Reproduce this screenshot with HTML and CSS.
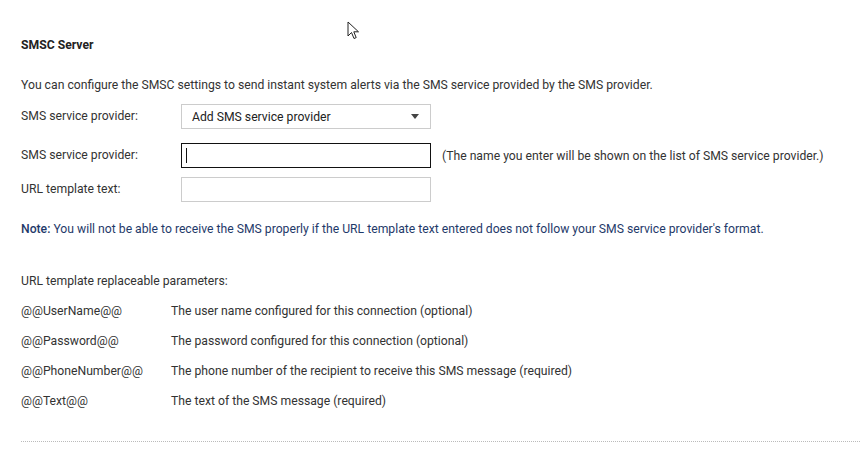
FILE: index.html
```html
<!DOCTYPE html>
<html>
<head>
    <title>SMSC Server</title>
    <link rel="stylesheet" href="styles.css">
</head>
<body>
    <div class="panel">
        <h3>SMSC Server</h3>
        <p class="desc">You can configure the SMSC settings to send instant system alerts via the SMS service provided by the SMS provider.</p>

        <div class="form-row first">
            <label>SMS service provider:</label>
            <div class="select">
                <span>Add SMS service provider</span>
                <span class="caret"></span>
            </div>
        </div>
        <div class="form-row second">
            <label for="provider">SMS service provider:</label>
            <div class="input-wrap">
                <input type="text" id="provider" class="focused">
                <span class="text-cursor"></span>
            </div>
            <span class="hint">(The name you enter will be shown on the list of SMS service provider.)</span>
        </div>
        <div class="form-row">
            <label for="url">URL template text:</label>
            <input type="text" id="url">
        </div>

        <p class="note"><b>Note:</b> You will not be able to receive the SMS properly if the URL template text entered does not follow your SMS service provider's format.</p>

        <p class="params-title">URL template replaceable parameters:</p>
        <div class="params">
            <div class="param"><span class="key">@@UserName@@</span><span>The user name configured for this connection (optional)</span></div>
            <div class="param"><span class="key">@@Password@@</span><span>The password configured for this connection (optional)</span></div>
            <div class="param"><span class="key">@@PhoneNumber@@</span><span>The phone number of the recipient to receive this SMS message (required)</span></div>
            <div class="param"><span class="key">@@Text@@</span><span>The text of the SMS message (required)</span></div>
        </div>

        <div class="divider"></div>
    </div>

    <svg class="pointer" width="14" height="20" viewBox="0 0 14 20">
        <path d="M1 1 L1 15 L4.5 11.5 L7 17.5 L9.2 16.6 L6.8 10.8 L11.5 10.8 Z" fill="#fff" stroke="#222" stroke-width="1"/>
    </svg>
</body>
</html>
```

FILE: styles.css
```css
body {
    font-family: Roboto, "Liberation Sans", sans-serif;
    font-size: 12.2px;
    color: #333;
    margin: 0;
    background: #fff;
}
.panel {
    padding: 37px 0 0 21px;
}
h3 {
    font-size: 12.2px;
    font-weight: bold;
    color: #222;
    margin: 0;
    line-height: 16px;
}
.desc {
    margin: 24px 0 0;
    line-height: 16px;
}
.form-row {
    display: flex;
    align-items: center;
    height: 25px;
    margin-top: 9px;
}
.form-row.first {
    margin-top: 11px;
}
.form-row.second {
    margin-top: 14px;
}
label {
    width: 160px;
    margin-top: -2px;
}
.select {
    border: 1px solid #ccc;
    display: flex;
    align-items: center;
    justify-content: space-between;
    padding: 0 10px;
    box-sizing: border-box;
    width: 250px;
    height: 25px;
    color: #222;
}
.caret {
    width: 0;
    height: 0;
    border-left: 4px solid transparent;
    border-right: 4px solid transparent;
    border-top: 5px solid #444;
    margin-right: 1px;
}
input {
    width: 250px;
    height: 25px;
    box-sizing: border-box;
    border: 1px solid #ccc;
    padding: 0 4px;
    margin: 0;
    font: inherit;
    display: block;
}
input.focused {
    border: 1px solid #111;
}
.input-wrap {
    position: relative;
}
.text-cursor {
    position: absolute;
    left: 5px;
    top: 5px;
    width: 1px;
    height: 15px;
    background: #111;
}
.hint {
    margin-left: 11px;
}
.note {
    color: #1f3a6a;
    margin: 19px 0 0;
    line-height: 16px;
}
.note b {
    font-weight: 500;
}
.params-title {
    margin: 36px 0 0;
    line-height: 16px;
}
.params {
    margin-top: 14px;
}
.param {
    display: flex;
    height: 30px;
    line-height: 16px;
}
.key {
    width: 150px;
}
.divider {
    margin-top: 18px;
    border-top: 1px dotted #bbb;
}
.pointer {
    position: absolute;
    left: 347px;
    top: 21px;
}
```
